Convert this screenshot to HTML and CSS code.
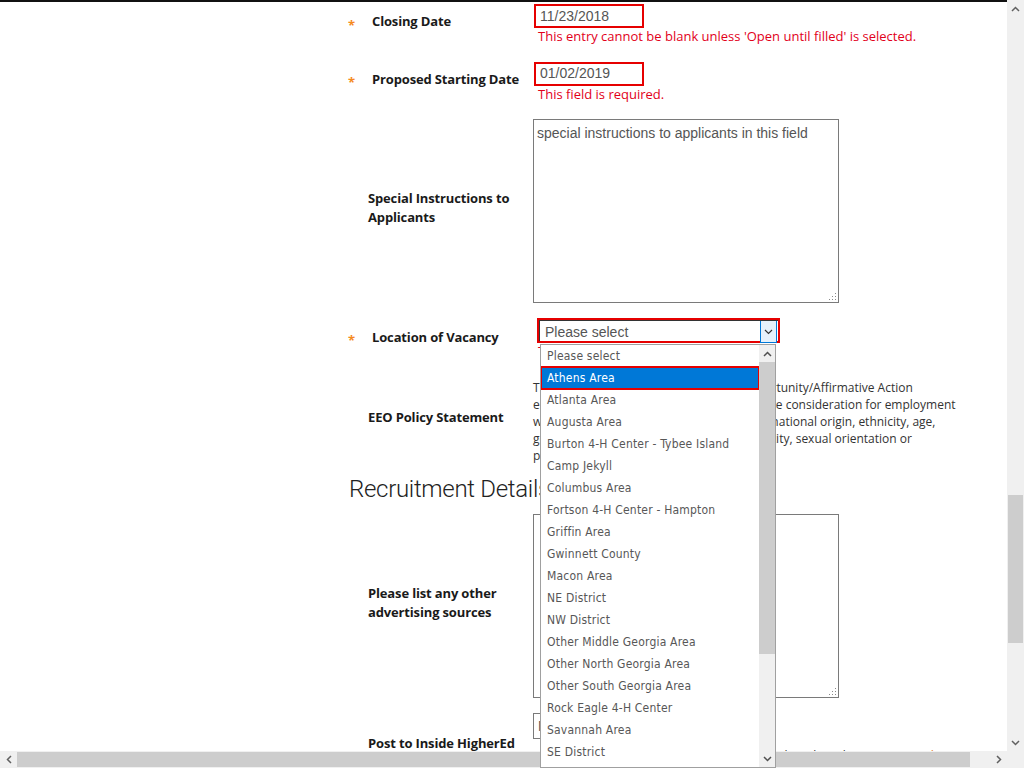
FILE: index.html
```html
<!DOCTYPE html>
<html lang="en">
<head>
<meta charset="utf-8">
<title>Position Details</title>
<link rel="stylesheet" href="styles.css">
</head>
<body>
<div class="window">
  <main class="page">
    <div class="topline"></div>
    <div class="form">
      <div class="rows">
        <div class="row">
          <span class="req">*</span>
          <label class="label label-req">Closing Date</label>
          <div class="field">
            <input class="date invalid" type="text" value="11/23/2018">
            <div class="error">This entry cannot be blank unless 'Open until filled' is selected.</div>
          </div>
        </div>
        <div class="row">
          <span class="req">*</span>
          <label class="label label-req">Proposed Starting Date</label>
          <div class="field">
            <input class="date invalid" type="text" value="01/02/2019">
            <div class="error">This field is required.</div>
          </div>
        </div>
        <div class="row">
          <span></span>
          <label class="label">Special Instructions to Applicants</label>
          <div class="field">
            <div class="ta-wrap">
              <textarea class="ta">special instructions to applicants in this field</textarea>
              <svg class="grip" width="9" height="9" viewBox="0 0 9 9"><rect x="7" y="1" width="1" height="1"/><rect x="4" y="4" width="1" height="1"/><rect x="7" y="4" width="1" height="1"/><rect x="1" y="7" width="1" height="1"/><rect x="4" y="7" width="1" height="1"/><rect x="7" y="7" width="1" height="1"/></svg>
            </div>
          </div>
        </div>
        <div class="row">
          <span class="req">*</span>
          <label class="label label-req">Location of Vacancy</label>
          <div class="field">
            <div class="select-wrap">
              <div class="select-box">
                <span class="select-text">Please select</span>
                <span class="select-arrow"><svg width="9" height="6" viewBox="0 0 9 6"><polyline points="1,1 4.5,4.5 8,1" fill="none" stroke="#333" stroke-width="1.2"/></svg></span>
              </div>
              <div class="listbox">
                <ul class="options">
                  <li>Please select</li>
                  <li class="selected">Athens Area</li>
                  <li>Atlanta Area</li>
                  <li>Augusta Area</li>
                  <li>Burton 4-H Center - Tybee Island</li>
                  <li>Camp Jekyll</li>
                  <li>Columbus Area</li>
                  <li>Fortson 4-H Center - Hampton</li>
                  <li>Griffin Area</li>
                  <li>Gwinnett County</li>
                  <li>Macon Area</li>
                  <li>NE District</li>
                  <li>NW District</li>
                  <li>Other Middle Georgia Area</li>
                  <li>Other North Georgia Area</li>
                  <li>Other South Georgia Area</li>
                  <li>Rock Eagle 4-H Center</li>
                  <li>Savannah Area</li>
                  <li>SE District</li>
                  <li>SW District</li>
                  <li>Tifton Area</li>
                </ul>
                <div class="list-scroll">
                  <span class="sb-btn sb-btn-v"><svg width="9" height="6" viewBox="0 0 9 6"><polyline points="1,5 4.5,1.5 8,5" fill="none" stroke="#505050" stroke-width="1.5"/></svg></span>
                  <span class="list-thumb"></span>
                  <span class="sb-fill"></span>
                  <span class="sb-btn sb-btn-v"><svg width="9" height="6" viewBox="0 0 9 6"><polyline points="1,1 4.5,4.5 8,1" fill="none" stroke="#505050" stroke-width="1.5"/></svg></span>
                </div>
              </div>
            </div>
            <div class="error error-gap">This field is required.</div>
          </div>
        </div>
        <div class="row">
          <span></span>
          <label class="label">EEO Policy Statement</label>
          <div class="field">
            <p class="eeo">The University of Georgia is an Equal Opportunity/Affirmative Action employer. All qualified applicants will receive consideration for employment without regard to race, color, religion, sex, national origin, ethnicity, age, genetic information, disability, gender identity, sexual orientation or protected veteran status.</p>
          </div>
        </div>
      </div>

      <h2 class="section-title">Recruitment Details</h2>

      <div class="rows">
        <div class="row">
          <span></span>
          <label class="label">Please list any other advertising sources</label>
          <div class="field">
            <div class="ta-wrap">
              <textarea class="ta"></textarea>
              <svg class="grip" width="9" height="9" viewBox="0 0 9 9"><rect x="7" y="1" width="1" height="1"/><rect x="4" y="4" width="1" height="1"/><rect x="7" y="4" width="1" height="1"/><rect x="1" y="7" width="1" height="1"/><rect x="4" y="7" width="1" height="1"/><rect x="7" y="7" width="1" height="1"/></svg>
            </div>
          </div>
        </div>
        <div class="row">
          <span></span>
          <label class="label">Post to Inside HigherEd</label>
          <div class="field">
            <div class="small-select">No</div>
            <p class="help">A posting fee is charged to the department when this job is sent to <a class="link" href="#">Inside HigherEd</a> through the posting service.</p>
          </div>
        </div>
      </div>
    </div>
  </main>

  <div class="vscroll">
    <span class="sb-btn sb-btn-v"><svg width="9" height="6" viewBox="0 0 9 6"><polyline points="1,5 4.5,1.5 8,5" fill="none" stroke="#606060" stroke-width="1.5"/></svg></span>
    <span class="v-thumb"></span>
    <span class="sb-fill"></span>
    <span class="sb-btn sb-btn-v"><svg width="9" height="6" viewBox="0 0 9 6"><polyline points="1,1 4.5,4.5 8,1" fill="none" stroke="#606060" stroke-width="1.5"/></svg></span>
  </div>
  <div class="hscroll">
    <span class="sb-btn sb-btn-h"><svg width="6" height="9" viewBox="0 0 6 9"><polyline points="5,1 1.5,4.5 5,8" fill="none" stroke="#606060" stroke-width="1.5"/></svg></span>
    <span class="h-thumb"></span>
    <span class="sb-fill"></span>
    <span class="sb-btn sb-btn-h"><svg width="6" height="9" viewBox="0 0 6 9"><polyline points="1,1 4.5,4.5 1,8" fill="none" stroke="#606060" stroke-width="1.5"/></svg></span>
  </div>
  <div class="corner"></div>
</div>
</body>
</html>
```

FILE: styles.css
```css
html, body {
  margin: 0;
  padding: 0;
  background: #fff;
  overflow: hidden;
}

body {
  font-family: "Open Sans", "Liberation Sans", sans-serif;
  color: #222;
}

.window {
  display: grid;
  grid-template-columns: 1007px 17px;
  grid-template-rows: 751px 17px;
  width: 1024px;
  height: 768px;
  overflow: hidden;
}

.page {
  grid-column: 1;
  grid-row: 1;
  min-height: 0;
}

.topline {
  height: 2px;
  background: #111;
}

.form {
  margin-left: 344px;
  padding-top: 2px;
  width: 640px;
}

.rows {
  display: flex;
  flex-direction: column;
  gap: 15px;
}

.row {
  display: grid;
  grid-template-columns: 24px 165px 1fr;
  align-items: center;
}

.req {
  color: #f58a1f;
  font-size: 13px;
  font-weight: 700;
  padding-left: 4px;
  line-height: 19px;
}

.label {
  font-size: 13px;
  font-weight: 700;
  line-height: 19px;
  letter-spacing: -0.15px;
  color: #1a1a1a;
  padding-top: 1px;
  padding-bottom: 8px;
  padding-right: 12px;
}

.label-req {
  padding-left: 4px;
}

.field {
  display: flex;
  flex-direction: column;
  align-items: flex-start;
}

.date {
  box-sizing: border-box;
  width: 110px;
  height: 24px;
  margin: 0 0 0 1px;
  padding: 0 4px 1px 4px;
  font-family: "Liberation Sans", Arial, sans-serif;
  font-size: 14px;
  color: #555;
  background: #fff;
  outline: none;
}

.invalid {
  border: 2px solid #e60000;
}

.error {
  font-size: 13px;
  line-height: 16.5px;
  color: #e2001a;
  padding-left: 5px;
  margin-bottom: 2px;
  white-space: nowrap;
}

.error-gap {
  margin-bottom: 4px;
}

.ta-wrap {
  position: relative;
  display: flex;
}

.ta {
  box-sizing: border-box;
  width: 306px;
  height: 184px;
  margin: 0;
  padding: 5px 3px 4px 3px;
  border: 1px solid #7a7a7a;
  font-family: "Liberation Sans", Arial, sans-serif;
  font-size: 14px;
  color: #555;
  resize: none;
  outline: none;
  background: #fff;
}

.grip {
  position: absolute;
  right: 2px;
  bottom: 2px;
  fill: #8a8a8a;
}

.select-wrap {
  position: relative;
  box-sizing: border-box;
  width: 243px;
  height: 25px;
  margin-left: 4px;
  border: 2px solid #e60000;
}

.select-box {
  display: flex;
  align-items: stretch;
  height: 100%;
  box-sizing: border-box;
  border-top: 1px solid #333;
  border-left: 1px solid #333;
}

.select-text {
  flex: 1;
  padding-left: 5px;
  font-family: "Liberation Sans", Arial, sans-serif;
  font-size: 14px;
  line-height: 23px;
  color: #555;
}

.select-arrow {
  box-sizing: border-box;
  width: 17px;
  margin-right: 1px;
  margin-bottom: -2px;
  background: #e5f1fb;
  border: 1px solid #0078d7;
  border-top: none;
  display: flex;
  align-items: center;
  justify-content: center;
}

.listbox {
  position: absolute;
  z-index: 20;
  top: calc(100% + 3px);
  left: 1px;
  box-sizing: border-box;
  width: 236px;
  height: 424px;
  border: 1px solid #a0a0a0;
  background: #fff;
  display: flex;
  overflow: hidden;
}

.options {
  list-style: none;
  margin: 0;
  padding: 0;
  width: 218px;
  font-family: "DejaVu Sans Condensed", "DejaVu Sans", sans-serif;
  font-stretch: condensed;
  font-size: 12px;
  letter-spacing: 0.2px;
  color: #575757;
}

.options li {
  height: 22px;
  line-height: 22px;
  padding-left: 6px;
  white-space: nowrap;
}

.options .selected {
  background: #0078d7;
  color: #fff;
  outline: 2px solid #e60000;
  outline-offset: -1px;
}

.list-scroll {
  width: 16px;
  background: #f0f0f0;
  display: flex;
  flex-direction: column;
}

.list-thumb {
  height: 292px;
  background: #cdcdcd;
}

.sb-btn {
  display: flex;
  align-items: center;
  justify-content: center;
  flex: none;
}

.sb-btn-v {
  height: 17px;
}

.sb-btn-h {
  width: 17px;
}

.sb-fill {
  flex: 1;
}

.eeo {
  margin: 0;
  width: 427px;
  font-size: 12px;
  line-height: 17px;
  color: #333;
}

.section-title {
  margin: 11px 0 10.5px 5px;
  font-family: Roboto, "Liberation Sans", sans-serif;
  font-weight: 300;
  font-size: 24px;
  line-height: 29px;
  letter-spacing: -0.3px;
  color: #222;
}

.small-select {
  box-sizing: border-box;
  width: 110px;
  height: 26px;
  border: 1px solid #7a7a7a;
  font-family: "Liberation Sans", Arial, sans-serif;
  font-size: 14px;
  line-height: 24px;
  padding-left: 4px;
  color: #555;
}

.help {
  margin: 8px 0 0 0;
  width: 427px;
  font-size: 12px;
  line-height: 17px;
  color: #333;
}

.link {
  color: #e87722;
  text-decoration: none;
}

.vscroll {
  grid-column: 2;
  grid-row: 1;
  background: #f0f0f0;
  display: flex;
  flex-direction: column;
  position: relative;
  z-index: 5;
}

.v-thumb {
  margin: 478px 1px 0 1px;
  height: 148px;
  background: #cdcdcd;
}

.hscroll {
  grid-column: 1;
  grid-row: 2;
  background: #f0f0f0;
  display: flex;
  position: relative;
  z-index: 5;
}

.h-thumb {
  width: 953px;
  margin: 1px 0;
  background: #cdcdcd;
}

.corner {
  grid-column: 2;
  grid-row: 2;
  background: #f0f0f0;
  position: relative;
  z-index: 5;
}
```
